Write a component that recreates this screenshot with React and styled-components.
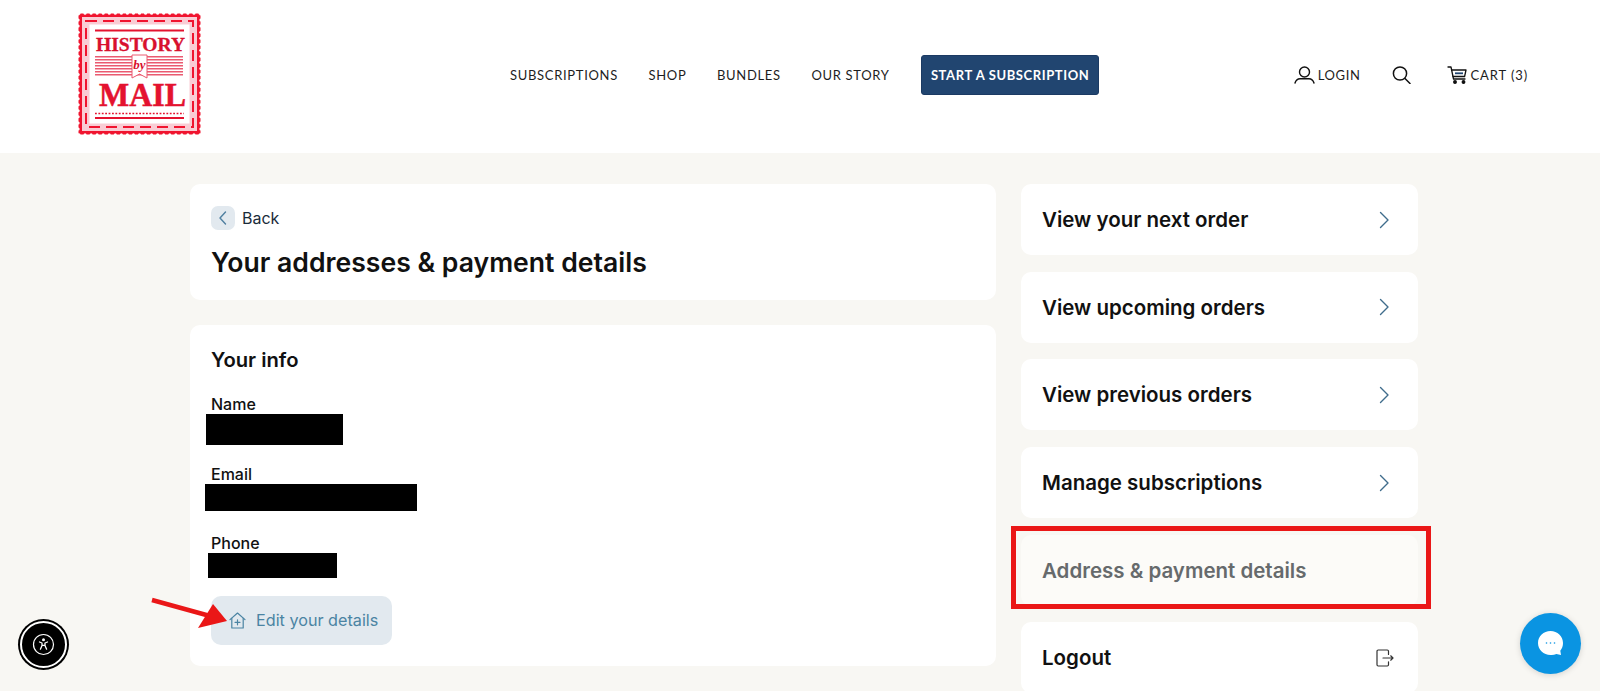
import React from "react";
import styled, { createGlobalStyle } from "styled-components";

const Global = createGlobalStyle`
  html, body { margin: 0; padding: 0; height: 691px; overflow: hidden; background: #f8f7f3; }
  * { box-sizing: border-box; }
  body { font-family: Inter, "Liberation Sans", sans-serif; color: #111; }
`;

const Page = styled.div`
  position: relative;
  width: 1600px;
  height: 691px;
  overflow: hidden;
`;

const Header = styled.header`
  display: flex;
  align-items: center;
  height: 153px;
  padding: 0 0 0 78px;
  background: #fff;
`;

const LogoWrap = styled.div`
  width: 123px;
  height: 122px;
  margin-top: -5px;
  flex: none;
`;

const Nav = styled.nav`
  display: flex;
  align-items: center;
  gap: 30.6px;
  margin: -4px 0 0 309px;
`;

const NavLink = styled.a`
  font-family: Lato, "Open Sans", sans-serif;
  font-size: 13px;
  letter-spacing: 0.68px;
  color: #1d1d1d;
  white-space: nowrap;
`;

const CtaButton = styled.a`
  display: flex;
  align-items: center;
  justify-content: center;
  width: 178px;
  height: 40px;
  margin-left: 1px;
  background: #214570;
  border: 1px solid #1b3a63;
  border-radius: 3px;
  color: #fff;
  font-family: Lato, "Open Sans", sans-serif;
  font-size: 13px;
  font-weight: 700;
  letter-spacing: 0.6px;
  white-space: nowrap;
`;

const Utils = styled.div`
  display: flex;
  align-items: center;
  margin: -4px 0 0 194.6px;
`;

const UtilLink = styled.a`
  display: flex;
  align-items: center;
  gap: 3px;
  margin-left: ${(p) => p.$ml || 0}px;
  font-family: Lato, "Open Sans", sans-serif;
  font-size: 13px;
  letter-spacing: ${(p) => p.$ls || 0.6}px;
  color: #1d1d1d;
  white-space: nowrap;
`;

const Main = styled.main`
  display: flex;
  gap: 25px;
  padding: 31px 0 0 190px;
`;

const LeftCol = styled.div`
  display: flex;
  flex-direction: column;
  gap: 25px;
  width: 806px;
  flex: none;
`;

const RightCol = styled.div`
  display: flex;
  flex-direction: column;
  gap: 16.7px;
  width: 397px;
  flex: none;
`;

const Card = styled.section`
  background: #fff;
  border-radius: 10px;
  padding: ${(p) => p.$pad};
  height: ${(p) => p.$h}px;
`;

const BackRow = styled.div`
  display: flex;
  align-items: center;
  gap: 7px;
  font-size: 16px;
  color: #1a2b3a;
`;

const BackChip = styled.span`
  display: flex;
  align-items: center;
  justify-content: center;
  width: 24px;
  height: 24px;
  background: #e2e9ef;
  border-radius: 7px;
`;

const Title = styled.h1`
  margin: 16px 0 0;
  font-size: 26.6px;
  line-height: 32px;
  font-weight: 600;
  color: #111;
`;

const SectionTitle = styled.h2`
  margin: 0;
  font-size: 20.2px;
  line-height: 28px;
  font-weight: 600;
  color: #111;
`;

const Field = styled.div`
  position: relative;
  height: ${(p) => p.$h}px;
  font-size: 16px;
  line-height: 18px;
  font-weight: 550;
  color: #111;
`;

const Redaction = styled.div`
  position: absolute;
  left: ${(p) => p.$x}px;
  top: ${(p) => p.$y}px;
  width: ${(p) => p.$w}px;
  height: ${(p) => p.$hh}px;
  background: #000;
`;

const Fields = styled.div`
  margin-top: 21px;
`;

const EditButton = styled.a`
  display: inline-flex;
  align-items: center;
  gap: 10px;
  width: 181px;
  height: 49px;
  margin-top: 3px;
  padding-left: 18px;
  border-radius: 10px;
  background: #e2e9ef;
  color: #4b84a3;
  font-size: 16.2px;
  white-space: nowrap;
`;

const MenuItem = styled.a`
  display: flex;
  align-items: center;
  justify-content: space-between;
  height: 71px;
  padding: 0 24px 0 21px;
  border-radius: 10px;
  background: ${(p) => (p.$active ? "#fcfbf8" : "#fff")};
  color: ${(p) => (p.$active ? "#666a6c" : "#111")};
  font-size: 20.5px;
  font-weight: 600;
  white-space: nowrap;
`;

const Highlight = styled.div`
  position: absolute;
  left: 1011px;
  top: 526px;
  width: 420px;
  height: 83px;
  border: 5px solid #ea1717;
  pointer-events: none;
`;

const ArrowLayer = styled.svg`
  position: absolute;
  left: 140px;
  top: 590px;
`;

const A11yButton = styled.div`
  position: absolute;
  left: 18px;
  top: 619px;
  width: 51px;
  height: 51px;
  border-radius: 50%;
  background: #000;
  display: flex;
  align-items: center;
  justify-content: center;
  &::before {
    content: "";
    position: absolute;
    inset: 2px;
    border: 2px solid #fff;
    border-radius: 50%;
  }
`;

const ChatButton = styled.div`
  position: absolute;
  left: 1520px;
  top: 613px;
  width: 61px;
  height: 61px;
  border-radius: 50%;
  background: #0a94e2;
  box-shadow: 0 1px 6px rgba(0, 0, 0, 0.15);
  display: flex;
  align-items: center;
  justify-content: center;
`;

const perforations = () => {
  const out = [];
  const step = 6.05;
  for (let i = 0; i <= 20; i++) {
    const v = 1 + i * step;
    out.push(<circle key={`t${i}`} cx={v} cy={0.2} r="1.5" fill="#fff" />);
    out.push(<circle key={`b${i}`} cx={v} cy={121.8} r="1.5" fill="#fff" />);
    out.push(<circle key={`l${i}`} cx={0.2} cy={v} r="1.5" fill="#fff" />);
    out.push(<circle key={`r${i}`} cx={122.8} cy={v} r="1.5" fill="#fff" />);
  }
  return out;
};

const Logo = () => (
  <svg width="123" height="122" viewBox="0 0 123 122">
    <rect x="0.5" y="0.5" width="122" height="121" fill="#f0142f" />
    {perforations()}
    <rect x="4" y="4" width="115" height="114" fill="#f9ccd4" />
    <rect x="8" y="8" width="107" height="106" fill="#f9ccd4" stroke="#f0142f" strokeWidth="2" strokeDasharray="11 6" />
    <rect x="11.5" y="11.5" width="100" height="99" fill="#fff" />
    <rect x="17" y="16.5" width="89" height="2" fill="#e4122f" />
    <text x="18" y="38" fontFamily="'Liberation Serif', serif" fontWeight="700" fontSize="19" fill="#d8102e" stroke="#d8102e" strokeWidth="0.3" textLength="89" lengthAdjust="spacingAndGlyphs">HISTORY</text>
    {[43, 46, 49, 52, 55, 58, 61].map((y) => (
      <rect key={y} x="17" y={y} width="88" height="1.5" fill="#ea5a70" />
    ))}
    <path d="M54 42h15v23l-7.500-4-7.500 4z" fill="#fff" stroke="#ea5a70" strokeWidth="1" />
    <text x="61.5" y="56" textAnchor="middle" fontFamily="'Liberation Serif', serif" fontStyle="italic" fontWeight="700" fontSize="13" fill="#d8102e">by</text>
    <text x="21" y="93" fontFamily="'Liberation Serif', serif" fontWeight="700" fontSize="34" fill="#e4122f" stroke="#e4122f" strokeWidth="0.5" textLength="87" lengthAdjust="spacingAndGlyphs">MAIL</text>
    <line x1="17" y1="100.5" x2="106" y2="100.5" stroke="#e4122f" strokeWidth="1.6" strokeDasharray="1.8 1.6" />
    <rect x="17" y="104" width="89" height="2" fill="#e4122f" />
  </svg>
);

const Chevron = ({ color = "#3f6c8c", size = 20 }) => (
  <svg width={size} height={size} viewBox="0 0 20 20" fill="none" stroke={color} strokeWidth="1.4" strokeLinecap="round" strokeLinejoin="round">
    <path d="M6.500 2.500 14 10l-7.500 7.500" />
  </svg>
);

const BackChevron = () => (
  <svg width="10" height="14" viewBox="0 0 10 14" fill="none" stroke="#4f7fa0" strokeWidth="1.4" strokeLinecap="round" strokeLinejoin="round">
    <path d="M7.500 1 2 7l5.500 6" />
  </svg>
);

const UserIcon = () => (
  <svg width="21" height="18" viewBox="0 0 21 18" fill="none" stroke="#111" strokeWidth="1.4" strokeLinecap="round">
    <circle cx="10.500" cy="6" r="5" />
    <path d="M1 17c1-3 3-4.200 5-4.200h9c2 0 4 1.200 5 4.200" />
  </svg>
);

const SearchIcon = () => (
  <svg width="19" height="18" viewBox="0 0 19 18" fill="none" stroke="#111" strokeWidth="1.500" strokeLinecap="round">
    <circle cx="8" cy="7.500" r="6.600" />
    <path d="m13 12.500 5 5" />
  </svg>
);

const CartIcon = () => (
  <svg width="20" height="18" viewBox="0 0 20 18" fill="none" stroke="#111" strokeWidth="1.300" strokeLinecap="round" strokeLinejoin="round">
    <path d="M1 1h3l2.500 12H18" />
    <path d="M4.600 4H19l-1.400 6.500H6" />
    <rect x="8" y="6.400" width="8" height="1.800" fill="#214570" stroke="none" />
    <circle cx="8" cy="16" r="1.300" fill="#111" />
    <circle cx="16.500" cy="16" r="1.300" fill="#111" />
  </svg>
);

const HomePlusIcon = () => (
  <svg width="17" height="17" viewBox="0 0 17 17" fill="none" stroke="#4b84a3" strokeWidth="1.200" strokeLinecap="round" strokeLinejoin="round">
    <path d="M1 7.600 8.500 1 16 7.600" />
    <path d="M2.800 6.400V16h11.400V6.400" />
    <path d="M8.500 7.800v5M6 10.300h5" />
  </svg>
);

const LogoutIcon = () => (
  <svg width="18" height="18" viewBox="0 0 18 18" fill="none" stroke="#333" strokeWidth="1.200" strokeLinecap="round" strokeLinejoin="round">
    <path d="M12.500 5.500V2.200A1.200 1.200 0 0 0 11.300 1H2.200A1.200 1.200 0 0 0 1 2.200v13.600A1.200 1.200 0 0 0 2.200 17h9.100a1.200 1.200 0 0 0 1.200-1.200v-3" />
    <path d="M7 9h10M14.700 6.800 17 9l-2.300 2.200" />
  </svg>
);

const A11yIcon = () => (
  <svg width="25" height="25" viewBox="0 0 25 25" fill="none" style={{ position: "relative" }}>
    <circle cx="12.500" cy="12.500" r="10" stroke="#fff" strokeWidth="1.200" />
    <circle cx="12.500" cy="7.800" r="1.500" fill="#fff" />
    <path d="M8.500 10 11 11v2.400l-1.600 3.800M16.500 10 14 11v2.400l1.600 3.800M11 13.400h3" stroke="#fff" strokeWidth="1.300" strokeLinecap="round" strokeLinejoin="round" />
  </svg>
);

const ChatIcon = () => (
  <svg width="27" height="28" viewBox="0 0 27 28">
    <path d="M13.500 1C20.400 1 26 6.400 26 13c0 3-1 5.600-2.700 7.700L24 25l-4.600-.9A13 13 0 0 1 13.500 25C6.600 25 1 19.600 1 13S6.600 1 13.500 1z" fill="#fff" />
    <circle cx="9.500" cy="13" r="0.800" fill="#0a94e2" />
    <circle cx="13.500" cy="13" r="0.800" fill="#0a94e2" />
    <circle cx="17.500" cy="13" r="0.800" fill="#0a94e2" />
  </svg>
);

const menu = [
  { label: "View your next order", icon: <Chevron /> },
  { label: "View upcoming orders", icon: <Chevron /> },
  { label: "View previous orders", icon: <Chevron /> },
  { label: "Manage subscriptions", icon: <Chevron /> },
  { label: "Address & payment details", active: true },
  { label: "Logout", icon: <LogoutIcon /> },
];

const fields = [
  { label: "Name", h: 69.5, r: { x: -5, y: 19, w: 137, h: 31 } },
  { label: "Email", h: 69, r: { x: -6.5, y: 19.5, w: 212.5, h: 27 } },
  { label: "Phone", h: 59, r: { x: -3, y: 19.5, w: 129, h: 25 } },
];

export default function App() {
  return (
    <Page>
      <Global />
      <Header>
        <LogoWrap>
          <Logo />
        </LogoWrap>
        <Nav>
          <NavLink>SUBSCRIPTIONS</NavLink>
          <NavLink>SHOP</NavLink>
          <NavLink>BUNDLES</NavLink>
          <NavLink>OUR STORY</NavLink>
          <CtaButton>START A SUBSCRIPTION</CtaButton>
        </Nav>
        <Utils>
          <UtilLink>
            <UserIcon />
            LOGIN
          </UtilLink>
          <UtilLink $ml={32}>
            <SearchIcon />
          </UtilLink>
          <UtilLink $ml={36} $ls={0.9}>
            <CartIcon />
            CART (3)
          </UtilLink>
        </Utils>
      </Header>
      <Main>
        <LeftCol>
          <Card $pad="22px 21px" $h={116}>
            <BackRow>
              <BackChip>
                <BackChevron />
              </BackChip>
              Back
            </BackRow>
            <Title>Your addresses &amp; payment details</Title>
          </Card>
          <Card $pad="21px 21px" $h={341}>
            <SectionTitle>Your info</SectionTitle>
            <Fields>
              {fields.map((f) => (
                <Field key={f.label} $h={f.h}>
                  {f.label}
                  <Redaction $x={f.r.x} $y={f.r.y} $w={f.r.w} $hh={f.r.h} />
                </Field>
              ))}
            </Fields>
            <EditButton>
              <HomePlusIcon />
              Edit your details
            </EditButton>
          </Card>
        </LeftCol>
        <RightCol>
          {menu.map((m) => (
            <MenuItem key={m.label} $active={m.active}>
              {m.label}
              {m.icon}
            </MenuItem>
          ))}
        </RightCol>
      </Main>
      <Highlight />
      <ArrowLayer width="100" height="50" viewBox="0 0 100 50">
        <path d="M12 10 70 26" stroke="#ea1717" strokeWidth="4.500" />
        <path d="M87 31 73 14 58 38z" fill="#ea1717" />
      </ArrowLayer>
      <A11yButton>
        <A11yIcon />
      </A11yButton>
      <ChatButton>
        <ChatIcon />
      </ChatButton>
    </Page>
  );
}
